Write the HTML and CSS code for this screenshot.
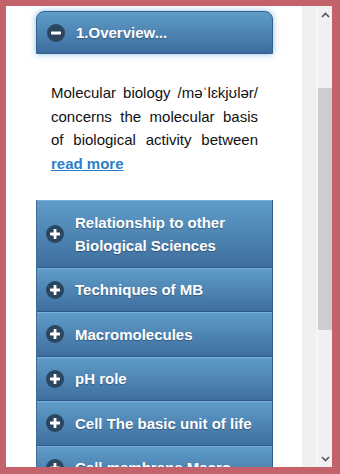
FILE: index.html
```html
<!DOCTYPE html>
<html>
<head>
<meta charset="utf-8">
<link rel="stylesheet" href="styles.css">
</head>
<body>
<div class="frame">
  <div class="content">
    <div class="header">
      <svg class="icon" viewBox="0 0 18 18" width="18" height="18"><circle cx="9" cy="9" r="9" fill="#2a4660"/><rect x="4" y="7.6" width="10" height="2.8" rx="0.6" fill="#fff"/></svg>
      <span class="title">1.Overview...</span>
    </div>
    <p class="intro">Molecular biology /məˈlɛkjʊlər/ concerns the molecular basis of biological activity between <a class="more" href="#">read more</a></p>
    <ul class="list">
      <li class="item"><svg class="icon" viewBox="0 0 18 18" width="18" height="18"><circle cx="9" cy="9" r="9" fill="#2a4660"/><rect x="4" y="7.6" width="10" height="2.8" rx="0.6" fill="#fff"/><rect x="7.6" y="4" width="2.8" height="10" rx="0.6" fill="#fff"/></svg><span class="label">Relationship to other Biological Sciences</span></li>
      <li class="item"><svg class="icon" viewBox="0 0 18 18" width="18" height="18"><circle cx="9" cy="9" r="9" fill="#2a4660"/><rect x="4" y="7.6" width="10" height="2.8" rx="0.6" fill="#fff"/><rect x="7.6" y="4" width="2.8" height="10" rx="0.6" fill="#fff"/></svg><span class="label">Techniques of MB</span></li>
      <li class="item"><svg class="icon" viewBox="0 0 18 18" width="18" height="18"><circle cx="9" cy="9" r="9" fill="#2a4660"/><rect x="4" y="7.6" width="10" height="2.8" rx="0.6" fill="#fff"/><rect x="7.6" y="4" width="2.8" height="10" rx="0.6" fill="#fff"/></svg><span class="label">Macromolecules</span></li>
      <li class="item"><svg class="icon" viewBox="0 0 18 18" width="18" height="18"><circle cx="9" cy="9" r="9" fill="#2a4660"/><rect x="4" y="7.6" width="10" height="2.8" rx="0.6" fill="#fff"/><rect x="7.6" y="4" width="2.8" height="10" rx="0.6" fill="#fff"/></svg><span class="label">pH role</span></li>
      <li class="item"><svg class="icon" viewBox="0 0 18 18" width="18" height="18"><circle cx="9" cy="9" r="9" fill="#2a4660"/><rect x="4" y="7.6" width="10" height="2.8" rx="0.6" fill="#fff"/><rect x="7.6" y="4" width="2.8" height="10" rx="0.6" fill="#fff"/></svg><span class="label">Cell The basic unit of life</span></li>
      <li class="item"><svg class="icon" viewBox="0 0 18 18" width="18" height="18"><circle cx="9" cy="9" r="9" fill="#2a4660"/><rect x="4" y="7.6" width="10" height="2.8" rx="0.6" fill="#fff"/><rect x="7.6" y="4" width="2.8" height="10" rx="0.6" fill="#fff"/></svg><span class="label">Cell membrane Macro</span></li>
    </ul>
  </div>
  <div class="gutter"></div>
  <div class="scrollbar">
    <div class="arrow"><svg viewBox="0 0 9 6" width="9" height="6"><path d="M1 5 L4.5 1.5 L8 5" fill="none" stroke="#555" stroke-width="1.6"/></svg></div>
    <div class="track-top"></div>
    <div class="thumb"></div>
    <div class="track-rest"></div>
    <div class="arrow"><svg viewBox="0 0 9 6" width="9" height="6"><path d="M1 1 L4.5 4.5 L8 1" fill="none" stroke="#555" stroke-width="1.6"/></svg></div>
  </div>
</div>
</body>
</html>
```
FILE: styles.css
```css
html, body {
  margin: 0;
  padding: 0;
  width: 340px;
  height: 474px;
  overflow: hidden;
  background: #c4626b;
}
.frame {
  box-sizing: border-box;
  width: 340px;
  height: 474px;
  border-style: solid;
  border-color: #c4626b;
  border-width: 6px 8px 7px 6px;
  display: flex;
  overflow: hidden;
  font-family: "Liberation Sans", Arial, sans-serif;
}
.content {
  width: 296px;
  flex: none;
  background: #fff;
  padding: 5px 29px 0 30px;
  box-sizing: border-box;
  overflow: hidden;
}
.header {
  height: 43px;
  box-sizing: border-box;
  display: flex;
  align-items: center;
  padding-left: 10px;
  border-radius: 8px 8px 0 0;
  background: linear-gradient(#5f9cc8, #3d6d9e);
  border: 1px solid #32628f;
  box-shadow: 0 0 6px rgba(90, 160, 225, 0.7);
}
.icon {
  flex: none;
  display: block;
}
.title, .label {
  color: #fff;
  font-weight: bold;
  font-size: 15px;
  line-height: 23px;
  text-shadow: 0 1px 1px rgba(0, 0, 0, 0.3);
}
.title {
  margin-left: 11px;
}
.intro {
  margin: 27px 0 0;
  padding: 0 15px;
  font-size: 15px;
  line-height: 23.5px;
  color: #111;
  text-align: justify;
}
.more {
  color: #2a80c8;
  font-weight: bold;
  text-decoration: underline;
}
.list {
  list-style: none;
  margin: 25px 0 0;
  padding: 0;
  border-left: 1px solid #3c6c9a;
  border-right: 1px solid #2f5d89;
}
.item {
  display: flex;
  align-items: center;
  padding: 9.75px 10px 9.75px 9px;
  background: linear-gradient(#5f9cc8, #3e6e9f);
  border-top: 1px solid #7aaed6;
  border-bottom: 1px solid #2c5a86;
}
.label {
  margin-left: 11px;
}
.gutter {
  width: 15px;
  flex: none;
  background: #f0f0f0;
  border-right: 1px solid #fafafa;
}
.scrollbar {
  width: 14px;
  flex: none;
  background: #f0f0f0;
  display: flex;
  flex-direction: column;
}
.arrow {
  height: 17px;
  flex: none;
  display: flex;
  align-items: center;
  justify-content: center;
}
.track-top {
  height: 65px;
  flex: none;
}
.thumb {
  height: 242px;
  flex: none;
  background: #cdcdcd;
}
.track-rest {
  flex: 1;
}
```
